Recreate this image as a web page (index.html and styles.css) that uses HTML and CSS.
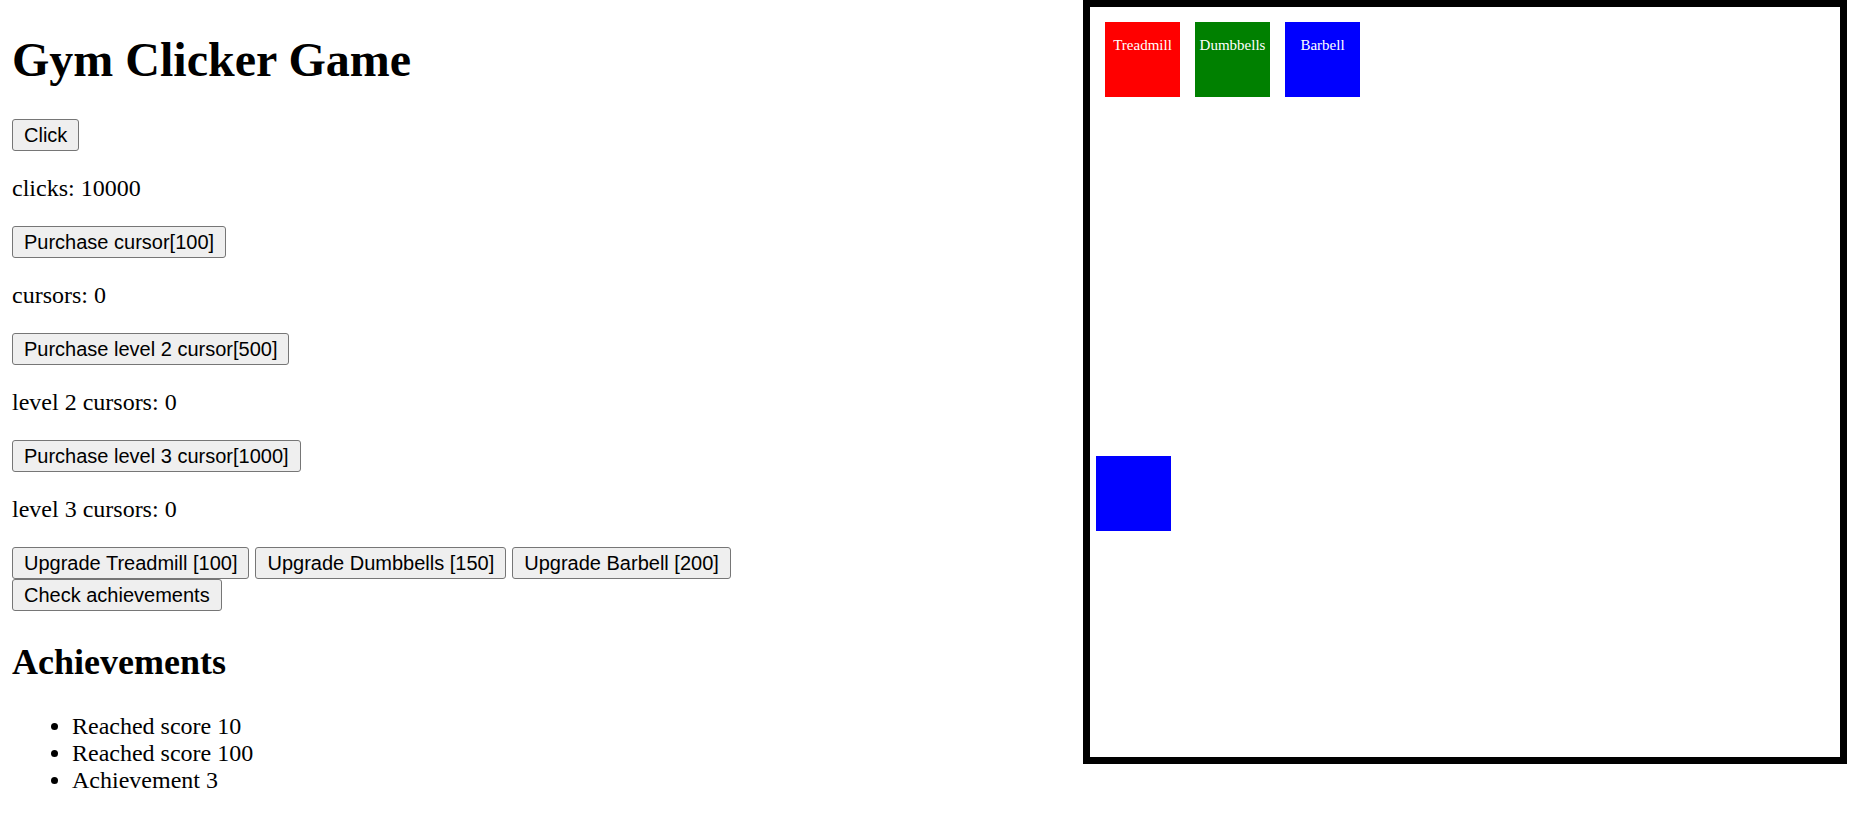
FILE: index.html
```html
<!DOCTYPE html>
<html lang="en">
<head>
<meta charset="utf-8">
<title>Gym Clicker Game</title>
<link rel="stylesheet" href="styles.css">
</head>
<body>
<div class="page">
  <div class="panel">
    <h1 class="title">Gym Clicker Game</h1>
    <div class="row"><button class="btn">Click</button></div>
    <p class="stat">clicks: 10000</p>
    <div class="row"><button class="btn">Purchase cursor[100]</button></div>
    <p class="stat">cursors: 0</p>
    <div class="row"><button class="btn">Purchase level 2 cursor[500]</button></div>
    <p class="stat">level 2 cursors: 0</p>
    <div class="row"><button class="btn">Purchase level 3 cursor[1000]</button></div>
    <p class="stat">level 3 cursors: 0</p>
    <div class="row"><button class="btn">Upgrade Treadmill [100]</button> <button class="btn">Upgrade Dumbbells [150]</button> <button class="btn">Upgrade Barbell [200]</button><br><button class="btn">Check achievements</button></div>
    <h2 class="subtitle">Achievements</h2>
    <ul class="list">
      <li>Reached score 10</li>
      <li>Reached score 100</li>
      <li>Achievement 3</li>
    </ul>
  </div>
  <div class="gym">
    <div class="machines">
      <div class="machine red"><p class="label">Treadmill</p></div>
      <div class="machine green"><p class="label">Dumbbells</p></div>
      <div class="machine blue"><p class="label">Barbell</p></div>
    </div>
    <div class="player"></div>
  </div>
</div>
</body>
</html>
```
FILE: styles.css
```css
html, body {
  margin: 0;
  padding: 0;
  background: #fff;
}

body {
  font-family: "Liberation Serif", "Times New Roman", serif;
  font-size: 24px;
  color: #000;
}

.page {
  display: flex;
  justify-content: space-between;
  align-items: flex-start;
}

.panel {
  padding: 0 12px 12px 12px;
}

.title {
  font-size: 48px;
  font-weight: bold;
  margin: 32px 0;
}

.subtitle {
  font-size: 36px;
  font-weight: bold;
  margin: 30px 0;
}

.stat {
  margin: 24px 0;
}

.btn {
  font-family: "Liberation Sans", Arial, sans-serif;
  font-size: 20px;
  color: #000;
  background: #efefef;
  border: 1px solid #767676;
  border-radius: 3px;
  padding: 3.5px 11px;
  margin: 0;
}

.list {
  margin: 24px 0;
  padding-left: 60px;
}

.gym {
  position: relative;
  width: 750px;
  height: 750px;
  border: 7px solid #000;
  margin-right: 2px;
  flex: none;
}

.machines {
  display: flex;
  gap: 15px;
  padding: 15px;
}

.machine {
  width: 75px;
  height: 75px;
  color: #fff;
  text-align: center;
  font-size: 15px;
}

.label {
  margin: 15px 0;
}

.red { background: #f00; }
.green { background: #008000; }
.blue { background: #00f; }

.player {
  position: absolute;
  left: 6px;
  top: 449px;
  width: 75px;
  height: 75px;
  background: #00f;
}
```
